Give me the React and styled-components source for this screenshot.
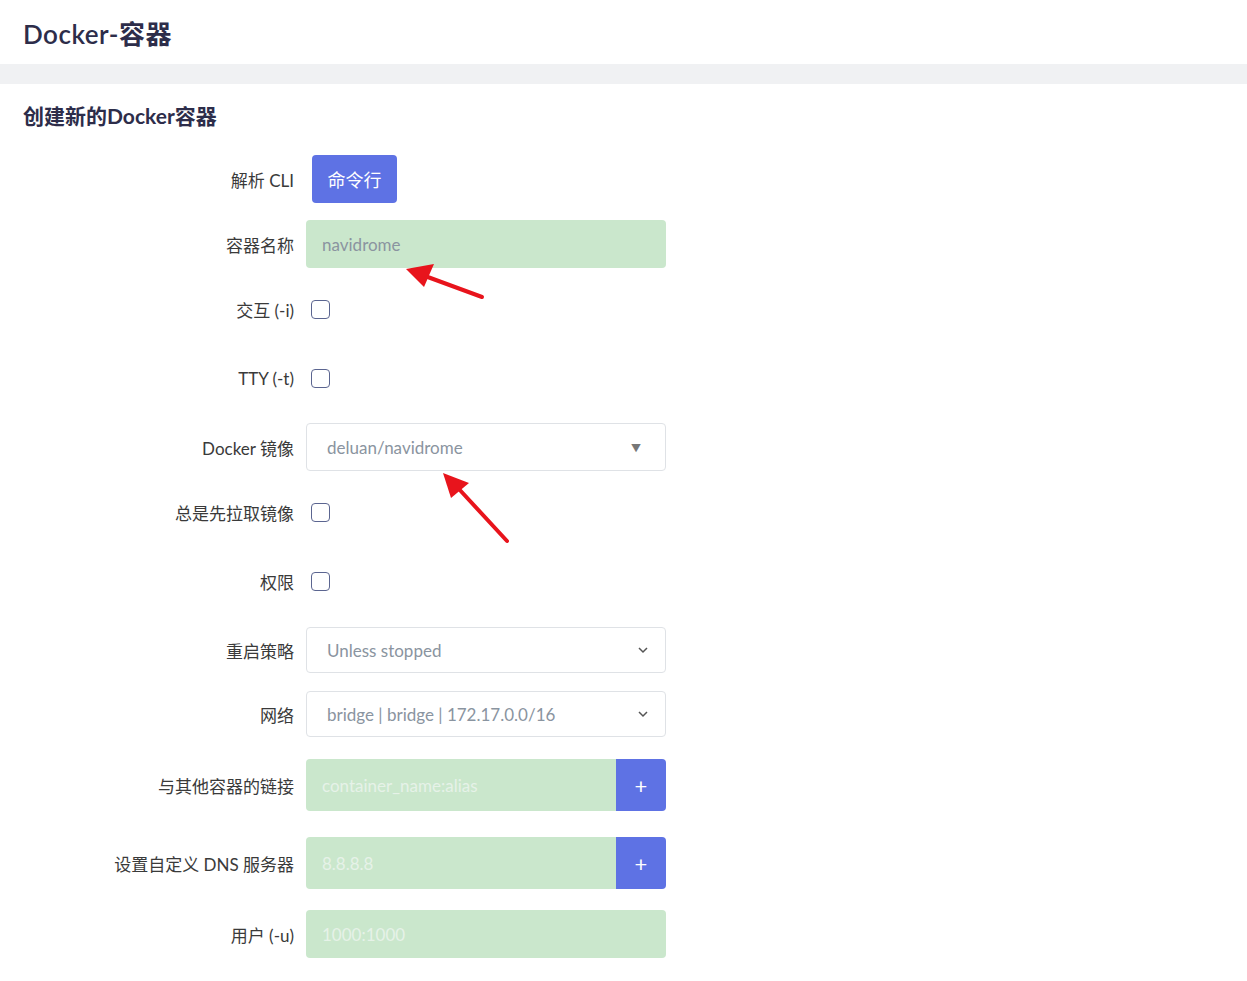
import React from 'react';
import styled, { createGlobalStyle } from 'styled-components';

const Global = createGlobalStyle`
  body {
    margin: 0;
    background: #fff;
    font-family: 'Lato', 'Noto Sans CJK SC', sans-serif;
  }
`;

const Page = styled.div`
  position: relative;
  width: 1247px;
  height: 981px;
  overflow: hidden;
`;

const TopBar = styled.div`
  height: 64px;
  display: flex;
  align-items: center;
  padding-left: 23px;
  font-size: 26px;
  font-weight: 600;
  letter-spacing: 0.5px;
  color: #2d2d4a;
  border-bottom: 20px solid #f0f1f3;
  box-sizing: content-box;
  padding-bottom: 0;
`;

const Section = styled.div`
  padding: 18px 23px 0;
`;

const Title = styled.h2`
  margin: 0 0 25px;
  font-size: 21px;
  font-weight: 700;
  color: #2d2d4a;
  line-height: 28px;
`;

const Row = styled.div`
  display: flex;
  align-items: center;
  height: ${(p) => p.h || 48}px;
  margin-top: ${(p) => p.gap || 0}px;
`;

const Label = styled.div`
  width: 283px;
  text-align: right;
  font-size: 17px;
  color: #3a3a3a;
  padding-right: 12px;
  box-sizing: border-box;
`;

const CliButton = styled.button`
  margin-left: 6px;
  height: 48px;
  width: 85px;
  border: none;
  border-radius: 4px;
  background: #5e72e4;
  color: #fff;
  font-size: 18px;
  font-family: inherit;
`;

const Field = styled.div`
  width: 360px;
  height: 100%;
  box-sizing: border-box;
  display: flex;
  align-items: center;
  padding-left: ${(p) => (p.filled ? 16 : 20)}px;
  padding-right: 16px;
  border-radius: 4px;
  font-size: 17px;
  color: ${(p) => (p.faint ? '#e6f2e8' : '#8a94a0')};
  background: ${(p) => (p.filled ? '#cae7cc' : '#fff')};
  border: ${(p) => (p.filled ? 'none' : '1px solid #dfe2e6')};
  justify-content: space-between;
`;

const Group = styled.div`
  width: 360px;
  height: 100%;
  display: flex;
`;

const GroupInput = styled(Field)`
  width: auto;
  flex: 1;
  border-radius: 4px 0 0 4px;
`;

const AddButton = styled.div`
  width: 50px;
  background: #5e72e4;
  border-radius: 0 4px 4px 0;
  color: #fff;
  font-size: 22px;
  display: flex;
  align-items: center;
  justify-content: center;
`;

const Check = styled.div`
  margin-left: 5px;
  width: 17px;
  height: 17px;
  border: 1.5px solid #5b6590;
  border-radius: 4px;
`;

const Caret = styled.span`
  font-size: 10px;
  color: #777;
  margin-right: 8px;
`;

const Arrow = styled.svg`
  position: absolute;
  left: 0;
  top: 0;
  pointer-events: none;
`;

const Chevron = () => (
  <svg width="12" height="12" viewBox="0 0 12 12">
    <path d="M2 4l4 4 4-4" fill="none" stroke="#555" strokeWidth="1.5" />
  </svg>
);

export default function App() {
  return (
    <Page>
      <Global />
      <TopBar>Docker-容器</TopBar>
      <Section>
        <Title>创建新的Docker容器</Title>
        <Row>
          <Label>解析 CLI</Label>
          <CliButton>命令行</CliButton>
        </Row>
        <Row gap={17}>
          <Label>容器名称</Label>
          <Field filled>navidrome</Field>
        </Row>
        <Row gap={17}>
          <Label>交互 (-i)</Label>
          <Check />
        </Row>
        <Row gap={21}>
          <Label>TTY (-t)</Label>
          <Check />
        </Row>
        <Row gap={21}>
          <Label>Docker 镜像</Label>
          <Field>deluan/navidrome<Caret>▼</Caret></Field>
        </Row>
        <Row gap={17}>
          <Label>总是先拉取镜像</Label>
          <Check />
        </Row>
        <Row gap={21}>
          <Label>权限</Label>
          <Check />
        </Row>
        <Row gap={22} h={46}>
          <Label>重启策略</Label>
          <Field>Unless stopped<Chevron /></Field>
        </Row>
        <Row gap={18} h={46}>
          <Label>网络</Label>
          <Field>bridge | bridge | 172.17.0.0/16<Chevron /></Field>
        </Row>
        <Row gap={22} h={52}>
          <Label>与其他容器的链接</Label>
          <Group>
            <GroupInput filled faint>container_name:alias</GroupInput>
            <AddButton>+</AddButton>
          </Group>
        </Row>
        <Row gap={26} h={52}>
          <Label>设置自定义 DNS 服务器</Label>
          <Group>
            <GroupInput filled faint>8.8.8.8</GroupInput>
            <AddButton>+</AddButton>
          </Group>
        </Row>
        <Row gap={21}>
          <Label>用户 (-u)</Label>
          <Field filled faint>1000:1000</Field>
        </Row>
      </Section>
      <Arrow width="1247" height="981">
        <line x1="482" y1="297" x2="425" y2="276" stroke="#e8141c" strokeWidth="4" strokeLinecap="round" />
        <polygon points="406,269 434,264 424,287" fill="#e8141c" />
        <line x1="507" y1="541" x2="458" y2="488" stroke="#e8141c" strokeWidth="4" strokeLinecap="round" />
        <polygon points="443,473 469,483 451,498" fill="#e8141c" />
      </Arrow>
    </Page>
  );
}
